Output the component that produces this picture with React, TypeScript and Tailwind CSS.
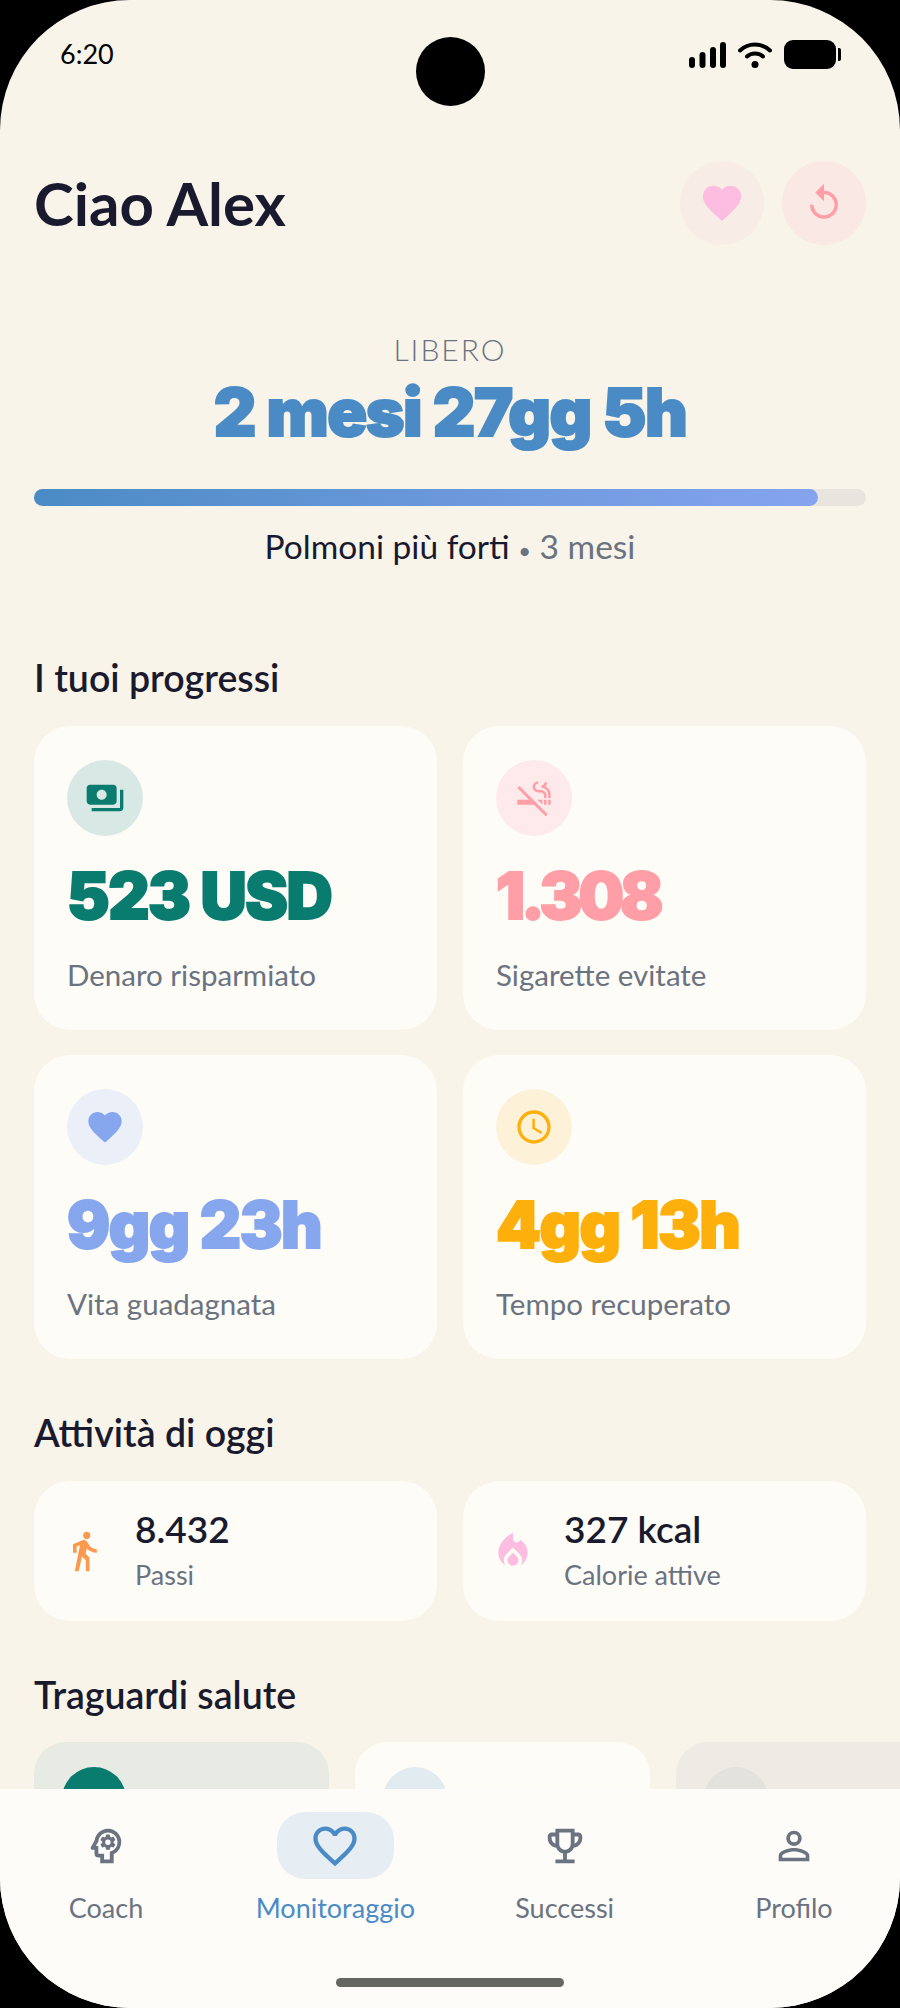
import { MdAccessTime, MdDirectionsWalk, MdFavorite, MdFavoriteBorder, MdLocalFireDepartment, MdOutlineEmojiEvents, MdOutlinePsychology, MdPayments, MdPersonOutline, MdReplay, MdSmokeFree } from 'react-icons/md'
import type { IconType } from 'react-icons'

const stats = [
  { Icon: MdPayments, value: '523 USD', label: 'Denaro risparmiato', color: 'text-[#0a7b6f]', stroke: 'tracking-[-1.5px] [-webkit-text-stroke:2px_#0a7b6f]', circle: 'bg-[#d8e8e4]' },
  { Icon: MdSmokeFree, value: '1.308', label: 'Sigarette evitate', color: 'text-[#ff9ea6]', stroke: 'tracking-[-4px] [-webkit-text-stroke:2px_#ff9ea6]', circle: 'bg-[#feeaea]' },
  { Icon: MdFavorite, value: '9gg 23h', label: 'Vita guadagnata', color: 'text-[#86a6ee]', stroke: 'tracking-[-1.5px] [-webkit-text-stroke:2px_#86a6ee]', circle: 'bg-[#ebeff8]' },
  { Icon: MdAccessTime, value: '4gg 13h', label: 'Tempo recuperato', color: 'text-[#fdb00c]', stroke: 'tracking-[-1.5px] [-webkit-text-stroke:2px_#fdb00c]', circle: 'bg-[#fdf2d8]' },
]

const navItems = [
  { Icon: MdOutlinePsychology, label: 'Coach' },
  { Icon: MdFavoriteBorder, label: 'Monitoraggio', active: true },
  { Icon: MdOutlineEmojiEvents, label: 'Successi' },
  { Icon: MdPersonOutline, label: 'Profilo' },
]

const StatCard = ({ Icon, value, label, color, stroke, circle }: (typeof stats)[number]) => (
  <div className="flex h-[304px] flex-col rounded-[36px] bg-[#fdfcf7] pl-[33px] pt-[34px]">
    <div className={`flex h-[76px] w-[76px] items-center justify-center rounded-full ${circle}`}>
      <Icon size={40} className={color} />
    </div>
    <p className={`mt-[22px] whitespace-nowrap font-['Inter'] text-[64px] font-black leading-[76px] ${color} ${stroke}`}>{value}</p>
    <p className="mt-[23px] text-[29.5px] leading-[36px] text-[#6b7280]">{label}</p>
  </div>
)

const ActivityCard = ({ Icon, value, label, color }: { Icon: IconType; value: string; label: string; color: string }) => (
  <div className="flex h-[140px] items-center gap-[29px] rounded-[36px] bg-[#fdfcf7] pl-[28px]">
    <Icon size={44} className={color} />
    <div className="pb-[4px]">
      <p className="text-[37px] font-semibold leading-[44px] text-[#1a1a2e]">{value}</p>
      <p className="mt-[7px] text-[27px] leading-[34px] text-[#6b7280]">{label}</p>
    </div>
  </div>
)

const StatusIcons = () => (
  <div className="flex items-center gap-[12px]">
    <svg width="37" height="26" viewBox="0 0 37 26" fill="#000">
      <rect x="0" y="15" width="6" height="11" rx="3" />
      <rect x="10.5" y="10" width="6" height="16" rx="3" />
      <rect x="21" y="5" width="6" height="21" rx="3" />
      <rect x="31" y="0" width="6" height="26" rx="3" />
    </svg>
    <svg width="34" height="26" viewBox="0 0 34 26" fill="none" stroke="#000" strokeWidth="4" strokeLinecap="round">
      <path d="M2 8.5C10.5 0.5 23.5 0.5 32 8.5" />
      <path d="M9 14.5C13.5 10.5 20.5 10.5 25 14.5" />
      <circle cx="17" cy="22.5" r="3.5" fill="#000" stroke="none" />
    </svg>
    <div className="flex items-center gap-[2px]">
      <div className="h-[29px] w-[52px] rounded-[9px] bg-black" />
      <div className="h-[13px] w-[3px] rounded-r-[2px] bg-black" />
    </div>
  </div>
)

export default function App() {
  return (
    <div className="h-[2008px] w-[900px] overflow-hidden bg-black font-['Lato',sans-serif]">
      <div className="flex h-full flex-col overflow-hidden rounded-[130px] bg-[#f8f4ea]">
        <div className="flex-1 overflow-hidden">
          <div className="flex items-start pl-[60px] pr-[59px] pt-[37px]">
            <div className="flex-1">
              <span className="block text-[27px] leading-[34px] text-black">6:20</span>
            </div>
            <div className="h-[69px] w-[69px] rounded-full bg-black" />
            <div className="flex flex-1 justify-end pt-[3px]">
              <StatusIcons />
            </div>
          </div>

          <div className="px-[34px]">
            <div className="mt-[55px] flex items-center justify-between">
              <h1 className="text-[60px] font-bold leading-[84px] text-[#1a1a2e]">Ciao Alex</h1>
              <div className="flex gap-[18px]">
                <div className="flex h-[84px] w-[84px] items-center justify-center rounded-full bg-[#f8ece7]">
                  <MdFavorite size={46} className="text-[#fdbde0]" />
                </div>
                <div className="flex h-[84px] w-[84px] items-center justify-center rounded-full bg-[#f9e8e3]">
                  <MdReplay size={42} className="text-[#ff9ea6]" />
                </div>
              </div>
            </div>

            <div className="mt-[86px] text-center">
              <p className="text-[30px] font-light leading-[36px] tracking-[2px] text-[#6b7280]">LIBERO</p>
              <p className="mt-[3px] whitespace-nowrap font-['Inter'] text-[66px] font-black leading-[84px] tracking-[-1.5px] text-[#4a8bc5] [-webkit-text-stroke:2px_#4a8bc5]">2 mesi 27gg 5h</p>
            </div>

            <div className="mt-[35px] h-[17px] rounded-full bg-[#e8e5df]">
              <div className="h-full w-[94.2%] rounded-full bg-gradient-to-r from-[#4a8bc5] to-[#85a4ee]" />
            </div>
            <p className="mt-[19px] text-center text-[33.5px] leading-[42px] text-[#1a1a2e]">
              Polmoni più forti <span className="text-[#6b7280]"><span className="text-[22px]">•</span> 3 mesi</span>
            </p>

            <h2 className="mt-[84px] text-[37.5px] font-semibold leading-[44px] text-[#1a1a2e]">I tuoi progressi</h2>
            <div className="mt-[26px] grid grid-cols-2 gap-x-[26px] gap-y-[25px]">
              {stats.map((s) => (
                <StatCard key={s.label} {...s} />
              ))}
            </div>

            <h2 className="mt-[52px] text-[37.5px] font-semibold leading-[44px] text-[#1a1a2e]">Attività di oggi</h2>
            <div className="mt-[26px] grid grid-cols-2 gap-x-[26px]">
              <ActivityCard Icon={MdDirectionsWalk} value="8.432" label="Passi" color="text-[#fb9a4f]" />
              <ActivityCard Icon={MdLocalFireDepartment} value="327 kcal" label="Calorie attive" color="text-[#fdbde0]" />
            </div>

            <h2 className="mt-[52px] text-[37.5px] font-semibold leading-[44px] text-[#1a1a2e]">Traguardi salute</h2>
            <div className="mt-[25px] flex gap-[26px]">
              <div className="h-[200px] w-[295px] shrink-0 rounded-[32px] bg-[#e7ebe3] pl-[28px] pt-[25px]">
                <div className="h-[64px] w-[64px] rounded-full bg-[#0a7b6f]" />
              </div>
              <div className="h-[200px] w-[295px] shrink-0 rounded-[32px] bg-[#fdfcf7] pl-[28px] pt-[25px]">
                <div className="h-[64px] w-[64px] rounded-full bg-[#e1ebf0]" />
              </div>
              <div className="h-[200px] w-[295px] shrink-0 rounded-[32px] bg-[#eeebe4] pl-[28px] pt-[25px]">
                <div className="h-[64px] w-[64px] rounded-full bg-[#e3e2dd]" />
              </div>
            </div>
          </div>
        </div>

        <div className="h-[219px] shrink-0 bg-[#fdfcf8] pt-[23px]">
          <div className="flex justify-between px-[32px]">
            {navItems.map(({ Icon, label, active }) => (
              <div key={label} className="flex w-[148px] flex-col items-center">
                <div className={`flex h-[67px] w-[117px] items-center justify-center rounded-[28px] ${active ? 'bg-[#e6eef4]' : ''}`}>
                  <Icon size={active ? 52 : 46} className={active ? 'text-[#4a8bc5]' : 'text-[#6b7280]'} />
                </div>
                <span className={`mt-[12px] text-[27px] leading-[34px] ${active ? 'text-[#4a8bc5]' : 'text-[#6b7280]'}`}>{label}</span>
              </div>
            ))}
          </div>
          <div className="mx-auto mt-[53px] h-[9px] w-[228px] rounded-full bg-[#666660]" />
        </div>
      </div>
    </div>
  )
}
